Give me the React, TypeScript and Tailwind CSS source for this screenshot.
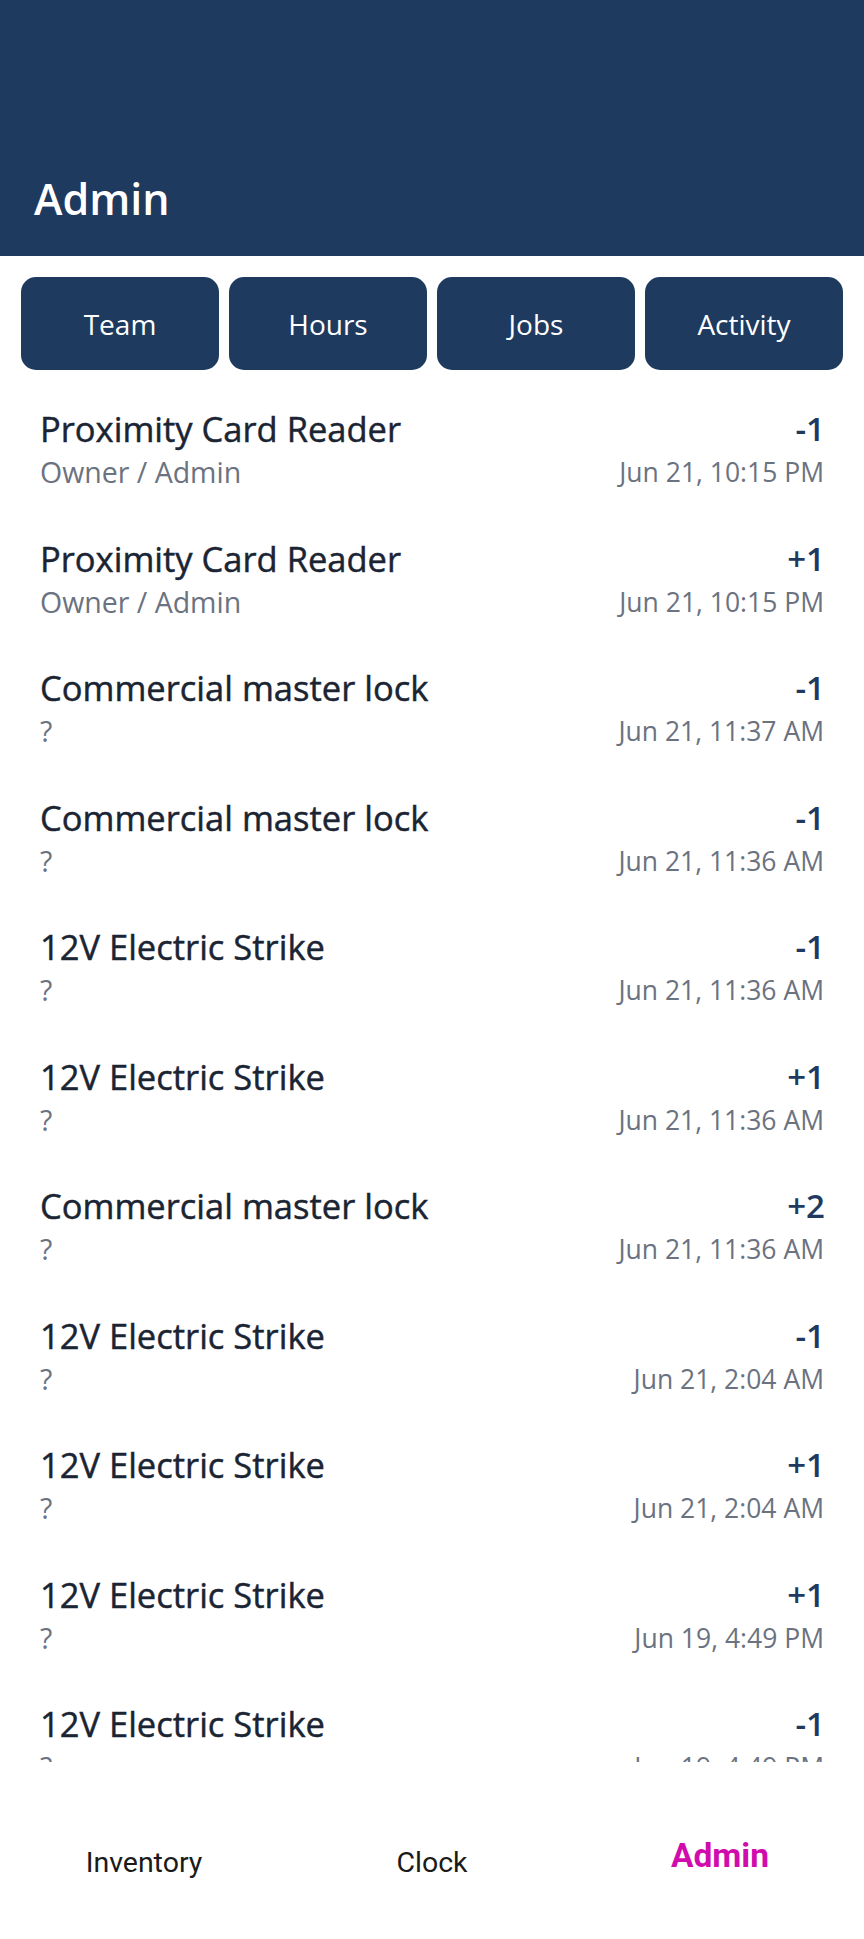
import React from "react";

const rows = [
  { t: "Proximity Card Reader", s: "Owner / Admin", a: "-1", d: "Jun 21, 10:15 PM" },
  { t: "Proximity Card Reader", s: "Owner / Admin", a: "+1", d: "Jun 21, 10:15 PM" },
  { t: "Commercial master lock", s: "?", a: "-1", d: "Jun 21, 11:37 AM" },
  { t: "Commercial master lock", s: "?", a: "-1", d: "Jun 21, 11:36 AM" },
  { t: "12V Electric Strike", s: "?", a: "-1", d: "Jun 21, 11:36 AM" },
  { t: "12V Electric Strike", s: "?", a: "+1", d: "Jun 21, 11:36 AM" },
  { t: "Commercial master lock", s: "?", a: "+2", d: "Jun 21, 11:36 AM" },
  { t: "12V Electric Strike", s: "?", a: "-1", d: "Jun 21, 2:04 AM" },
  { t: "12V Electric Strike", s: "?", a: "+1", d: "Jun 21, 2:04 AM" },
  { t: "12V Electric Strike", s: "?", a: "+1", d: "Jun 19, 4:49 PM" },
  { t: "12V Electric Strike", s: "?", a: "-1", d: "Jun 19, 4:49 PM" },
];

export default function App() {
  return (
    <div className="w-[864px] h-[1939px] bg-white flex flex-col overflow-hidden" style={{ fontFamily: '"Open Sans", sans-serif' }}>
      <div className="h-[256px] shrink-0 bg-[#1f3a5f] flex items-end pl-[34px] pb-[36px]">
        <h1 className="text-[43px] leading-none font-semibold text-white">Admin</h1>
      </div>
      <div className="shrink-0 flex gap-[10px] px-[21px] pt-[21px]">
        {["Team", "Hours", "Jobs", "Activity"].map((l) => (
          <button key={l} className="flex-1 h-[93px] rounded-[15px] bg-[#1f3a5f] text-white text-[28px] flex items-center justify-center">
            {l}
          </button>
        ))}
      </div>
      <div className="h-[1392px] shrink-0 overflow-hidden pt-[14px]">
        {rows.map((r, i) => (
          <div key={i} className="h-[129.5px] flex justify-between pl-[40px] pr-[39px] pt-[22px]">
            <div className="flex flex-col">
              <span className="text-[34.5px] leading-[46px] font-normal text-[#1a2433] [-webkit-text-stroke:0.45px_#1a2433]">{r.t}</span>
              <span className="text-[28.5px] leading-[40px] text-[#6b7280]">{r.s}</span>
            </div>
            <div className="flex flex-col items-end">
              <span className="text-[33px] leading-[46px] font-semibold text-[#1e3a5f]">{r.a}</span>
              <span className="text-[26.5px] leading-[40px] text-[#6b7280] pr-[1px]">{r.d}</span>
            </div>
          </div>
        ))}
      </div>
      <div className="flex-1 grid grid-cols-3" style={{ fontFamily: 'Roboto, sans-serif' }}>
        <div className="flex justify-center pt-[87px]">
          <span className="text-[28.5px] leading-[28px] text-[#1a1a1a]">Inventory</span>
        </div>
        <div className="flex justify-center pt-[87px]">
          <span className="text-[28.5px] leading-[28px] text-[#1a1a1a]">Clock</span>
        </div>
        <div className="flex justify-center pt-[77px]">
          <span className="text-[33.5px] leading-[33px] font-bold text-[#d10cad]">Admin</span>
        </div>
      </div>
    </div>
  );
}
